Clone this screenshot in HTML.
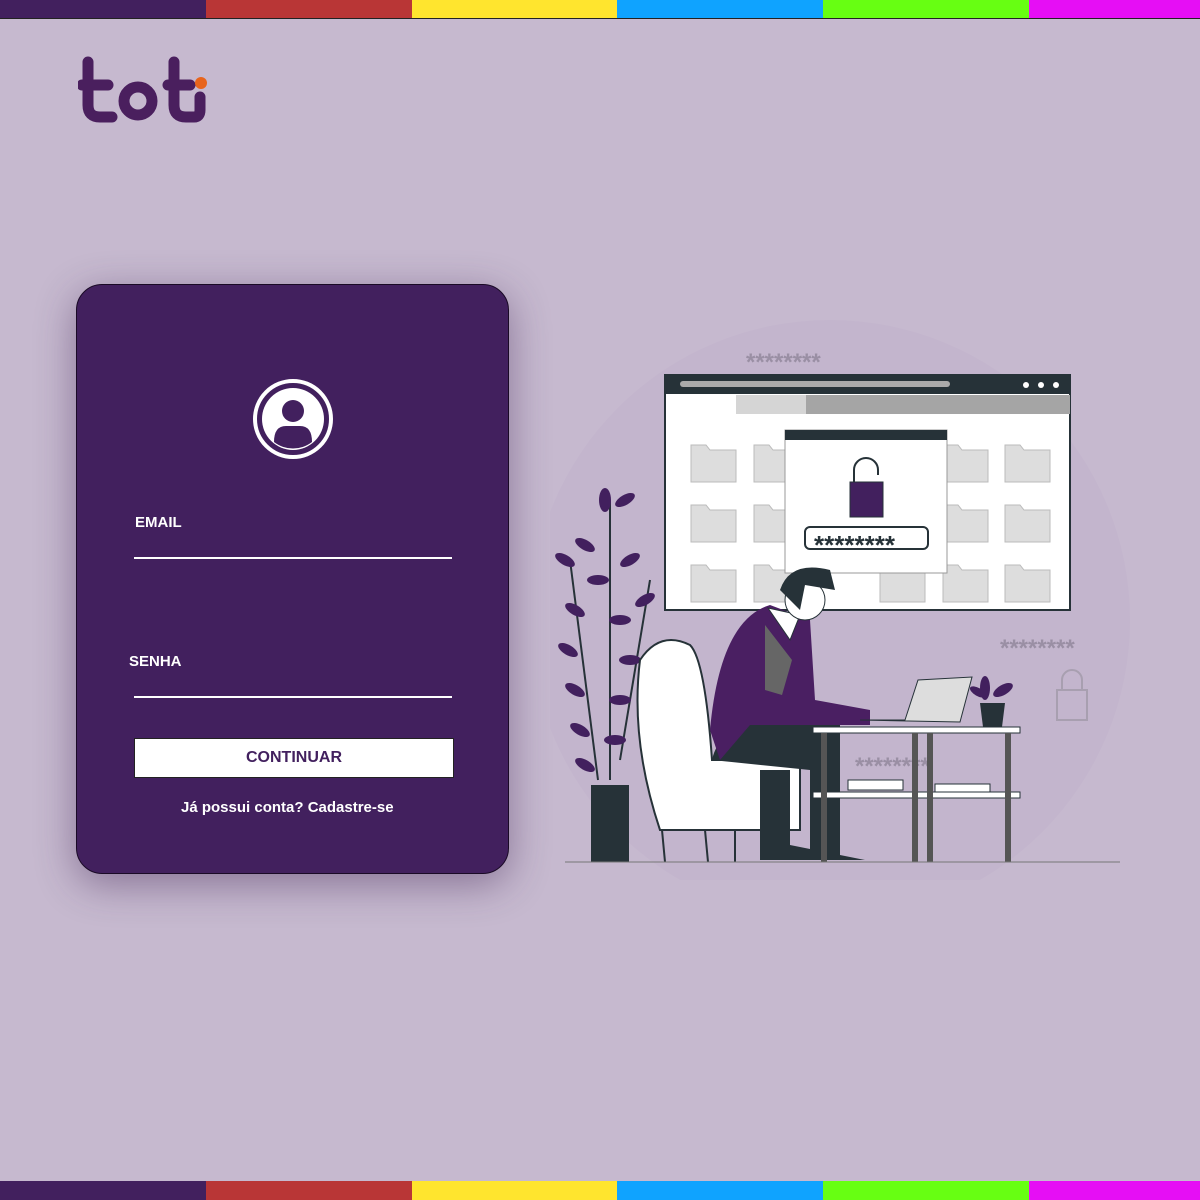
<!DOCTYPE html><html><head><meta charset="utf-8"><style>
body{margin:0;width:1200px;height:1200px;background:#c6b9cf;position:relative;overflow:hidden;font-family:"Liberation Sans",sans-serif}
.st{position:absolute;left:0;width:1200px;height:19px;display:flex}
.st div{width:206px}.st div:last-child{width:171px}
.card{position:absolute;left:76px;top:284px;width:431px;height:588px;background:#42205e;border:1px solid #1a0a26;border-radius:26px;box-shadow:0 10px 40px rgba(60,30,80,.45)}
.lbl{position:absolute;color:#fff;font-weight:bold;font-size:16px}
.line{position:absolute;left:57px;width:318px;height:2px;background:#fff}
.btn{position:absolute;left:57px;top:453px;width:318px;height:38px;background:#fff;border:1px solid #222;color:#42205e;font-weight:bold;font-size:16px;text-align:center;line-height:38px}
</style></head><body>
<div class="st" style="top:0;border-bottom:1px solid #222;height:18px"><div style="background:#42205e"></div><div style="background:#b93636"></div><div style="background:#ffe52e"></div><div style="background:#0fa3ff"></div><div style="background:#67ff12"></div><div style="background:#e60ef5"></div></div>
<div class="st" style="top:1181px"><div style="background:#42205e"></div><div style="background:#b93636"></div><div style="background:#ffe52e"></div><div style="background:#0fa3ff"></div><div style="background:#67ff12"></div><div style="background:#e60ef5"></div></div>
<svg style="position:absolute;left:78px;top:55px" width="132" height="72" viewBox="0 0 132 72">
<g fill="none" stroke="#4a1f5e" stroke-width="11" stroke-linecap="round">
<path d="M10 7 V50 Q10 62 22 62 H34"/><path d="M4 30 H30"/>
<circle cx="60" cy="46" r="14"/>
<path d="M96 7 V50 Q96 62 108 62 H116 Q122 62 122 55 V42"/><path d="M90 30 H112"/>
</g><circle cx="123" cy="28" r="6" fill="#e8641c"/></svg>
<div class="card">
<svg style="position:absolute;left:175px;top:93px" width="82" height="82" viewBox="0 0 82 82"><circle cx="41" cy="41" r="38" fill="none" stroke="#fff" stroke-width="4"/><circle cx="41" cy="41" r="31" fill="#fff"/><circle cx="41" cy="33" r="11" fill="#42205e"/><path d="M22 64 Q22 48 34 48 H48 Q60 48 60 64 A31 31 0 0 1 22 64Z" fill="#42205e"/></svg>
<div class="lbl" style="left:58px;top:229px;font-size:15px">EMAIL</div><div class="line" style="top:272px"></div>
<div class="lbl" style="left:52px;top:368px;font-size:15px">SENHA</div><div class="line" style="top:411px"></div>
<div class="btn">CONTINUAR</div>
<div class="lbl" style="left:104px;top:514px;font-size:15px">Já possui conta? Cadastre-se</div>
</div>
<svg style="position:absolute;left:550px;top:320px" width="580" height="560" viewBox="550 320 580 560">
<circle cx="830" cy="620" r="300" fill="#c3b5cd"/>
<g fill="#9a8fa4" font-size="24" font-weight="bold"><text x="746" y="370">********</text>
<text x="1000" y="656">********</text>
<text x="855" y="774">********</text></g>
<rect x="1057" y="690" width="30" height="30" fill="none" stroke="#a89fb0" stroke-width="2"/><path d="M1062 690 V680 A10 10 0 0 1 1082 680 V690" fill="none" stroke="#a89fb0" stroke-width="2"/>
<rect x="665" y="375" width="405" height="235" fill="#fff" stroke="#263238" stroke-width="2"/>
<rect x="665" y="375" width="405" height="19" fill="#263238"/>
<rect x="680" y="381" width="270" height="6" rx="3" fill="#aaa"/>
<circle cx="1026" cy="385" r="3" fill="#fff"/><circle cx="1041" cy="385" r="3" fill="#fff"/><circle cx="1056" cy="385" r="3" fill="#fff"/>
<rect x="736" y="395" width="70" height="19" fill="#d5d5d5"/><rect x="806" y="395" width="264" height="19" fill="#a5a5a5"/>
<g fill="#ddd" stroke="#bbb">
<path d="M691 445 h15 l4 5 h26 v32 h-45z"/><path d="M754 445 h15 l4 5 h26 v32 h-45z"/><path d="M943 445 h15 l4 5 h26 v32 h-45z"/><path d="M1005 445 h15 l4 5 h26 v32 h-45z"/>
<path d="M691 505 h15 l4 5 h26 v32 h-45z"/><path d="M754 505 h15 l4 5 h26 v32 h-45z"/><path d="M943 505 h15 l4 5 h26 v32 h-45z"/><path d="M1005 505 h15 l4 5 h26 v32 h-45z"/>
<path d="M691 565 h15 l4 5 h26 v32 h-45z"/><path d="M754 565 h15 l4 5 h26 v32 h-45z"/><path d="M880 565 h15 l4 5 h26 v32 h-45z"/><path d="M943 565 h15 l4 5 h26 v32 h-45z"/><path d="M1005 565 h15 l4 5 h26 v32 h-45z"/>
</g>
<rect x="785" y="430" width="162" height="143" fill="#fff" stroke="#999"/><rect x="785" y="430" width="162" height="10" fill="#263238"/>
<path d="M854 482 V470 A12 12 0 0 1 878 470 V475" fill="none" stroke="#263238" stroke-width="2"/>
<rect x="850" y="482" width="33" height="35" fill="#42205e" stroke="#263238"/>
<rect x="805" y="527" width="123" height="22" rx="5" fill="#fff" stroke="#263238" stroke-width="2"/>
<text x="814" y="554" font-size="26" font-weight="bold" fill="#263238">********</text>
<g stroke="#263238" stroke-width="2" fill="none"><path d="M610 780 V500"/><path d="M598 780 L570 560"/><path d="M620 760 L650 580"/></g>
<g fill="#42205e">
<ellipse cx="605" cy="500" rx="6" ry="12"/><ellipse cx="625" cy="500" rx="11" ry="5" transform="rotate(-30 625 500)"/><ellipse cx="585" cy="545" rx="11" ry="5" transform="rotate(30 585 545)"/><ellipse cx="630" cy="560" rx="11" ry="5" transform="rotate(-30 630 560)"/><ellipse cx="565" cy="560" rx="11" ry="5" transform="rotate(30 565 560)"/><ellipse cx="598" cy="580" rx="11" ry="5"/><ellipse cx="645" cy="600" rx="11" ry="5" transform="rotate(-30 645 600)"/><ellipse cx="575" cy="610" rx="11" ry="5" transform="rotate(30 575 610)"/><ellipse cx="620" cy="620" rx="11" ry="5"/><ellipse cx="568" cy="650" rx="11" ry="5" transform="rotate(30 568 650)"/><ellipse cx="630" cy="660" rx="11" ry="5"/><ellipse cx="575" cy="690" rx="11" ry="5" transform="rotate(30 575 690)"/><ellipse cx="620" cy="700" rx="11" ry="5"/><ellipse cx="580" cy="730" rx="11" ry="5" transform="rotate(30 580 730)"/><ellipse cx="615" cy="740" rx="11" ry="5"/><ellipse cx="585" cy="765" rx="11" ry="5" transform="rotate(30 585 765)"/>
</g>
<rect x="591" y="785" width="38" height="77" fill="#263238"/>
<path d="M640 660 Q660 630 690 645 Q705 660 712 760 L800 760 L800 830 L660 830 Q630 740 640 660Z" fill="#fff" stroke="#263238" stroke-width="2"/>
<g stroke="#263238" stroke-width="2"><line x1="662" y1="830" x2="665" y2="862"/><line x1="705" y1="830" x2="708" y2="862"/><line x1="735" y1="830" x2="735" y2="862"/></g>
<path d="M712 760 Q720 720 790 718 L840 725 L840 860 L810 860 L810 770 Z" fill="#263238"/>
<path d="M760 860 L760 770 L790 770 L790 845 L865 860Z" fill="#263238"/>
<path d="M710 730 Q720 620 770 605 L810 620 L815 700 L870 710 L870 725 L750 725 L720 760Z" fill="#4a1f62"/>
<path d="M765 625 L792 660 L782 695 L765 690Z" fill="#666"/>
<path d="M768 608 L790 640 L800 615Z" fill="#fff" stroke="#263238"/>
<circle cx="805" cy="600" r="20" fill="#fff" stroke="#263238"/><path d="M780 590 Q790 560 830 570 L835 590 L805 585 L800 610 Z" fill="#263238"/>
<path d="M860 720 L905 720 L918 680 L972 677 L960 722 Z" fill="#ddd" stroke="#263238"/>
<rect x="813" y="727" width="207" height="6" fill="#fff" stroke="#263238"/>
<rect x="813" y="792" width="207" height="6" fill="#fff" stroke="#263238"/>
<rect x="848" y="780" width="55" height="10" fill="#fff" stroke="#263238"/><rect x="935" y="784" width="55" height="8" fill="#fff" stroke="#263238"/>
<g fill="#555"><rect x="821" y="733" width="6" height="129"/><rect x="912" y="733" width="6" height="129"/><rect x="927" y="733" width="6" height="129"/><rect x="1005" y="733" width="6" height="129"/></g>
<path d="M980 703 H1005 L1002 727 H983Z" fill="#263238"/><ellipse cx="985" cy="688" rx="5" ry="12" fill="#42205e"/><ellipse cx="1003" cy="690" rx="11" ry="5" transform="rotate(-30 1003 690)" fill="#42205e"/><ellipse cx="978" cy="692" rx="9" ry="4" transform="rotate(30 978 692)" fill="#42205e"/>
<line x1="565" y1="862" x2="1120" y2="862" stroke="#777"/>
</svg>
</body></html>
